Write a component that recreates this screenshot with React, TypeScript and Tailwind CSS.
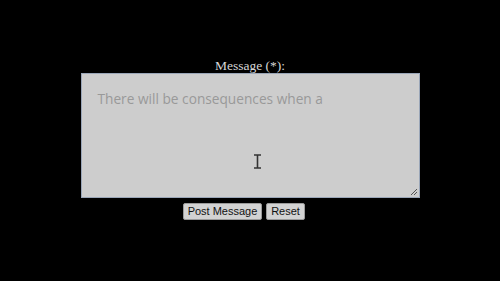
import React from "react";

/**
 * Message form
 */

const App: React.FC = () => {
  return (
    <div className="w-[500px] h-[281px] bg-black flex flex-col items-center pt-[58px]">
      <label className="font-['Liberation_Serif',serif] text-[13.5px] leading-[15px] text-[#d6d6d6]">
        Message (*):
      </label>
      <div className="relative w-[339px] h-[125px] bg-[#cdcdcd] border border-[#9aa6b8] pl-[16px] pt-[12px]">
        <span className="font-['Open_Sans',sans-serif] text-[13.7px] text-[#999999]">
          There will be consequences when a
        </span>
        {/* i-beam cursor */}
        <svg
          className="absolute left-[171px] top-[80px]"
          width="9"
          height="15"
          viewBox="0 0 9 15"
        >
          <path d="M1 1h7M4.5 1v13M1 14h7" stroke="#333" strokeWidth="1.6" fill="none" />
        </svg>
        {/* resize grip */}
        <svg
          className="absolute right-[1px] bottom-[1px]"
          width="8"
          height="8"
          viewBox="0 0 8 8"
        >
          <path d="M7 1L1 7M7 4L4 7" stroke="#555" strokeWidth="1" fill="none" />
        </svg>
      </div>
      <div className="flex gap-[4px] mt-[5px] mr-[12px] font-['Liberation_Sans',sans-serif] text-[11px] text-[#111]">
        <button className="h-[17px] w-[79px] leading-[15px] bg-[#d2d2d2] border border-[#9a9a9a] rounded-[2px]">
          Post Message
        </button>
        <button className="h-[17px] w-[39px] leading-[15px] bg-[#d2d2d2] border border-[#9a9a9a] rounded-[2px]">
          Reset
        </button>
      </div>
    </div>
  );
};

export default App;
